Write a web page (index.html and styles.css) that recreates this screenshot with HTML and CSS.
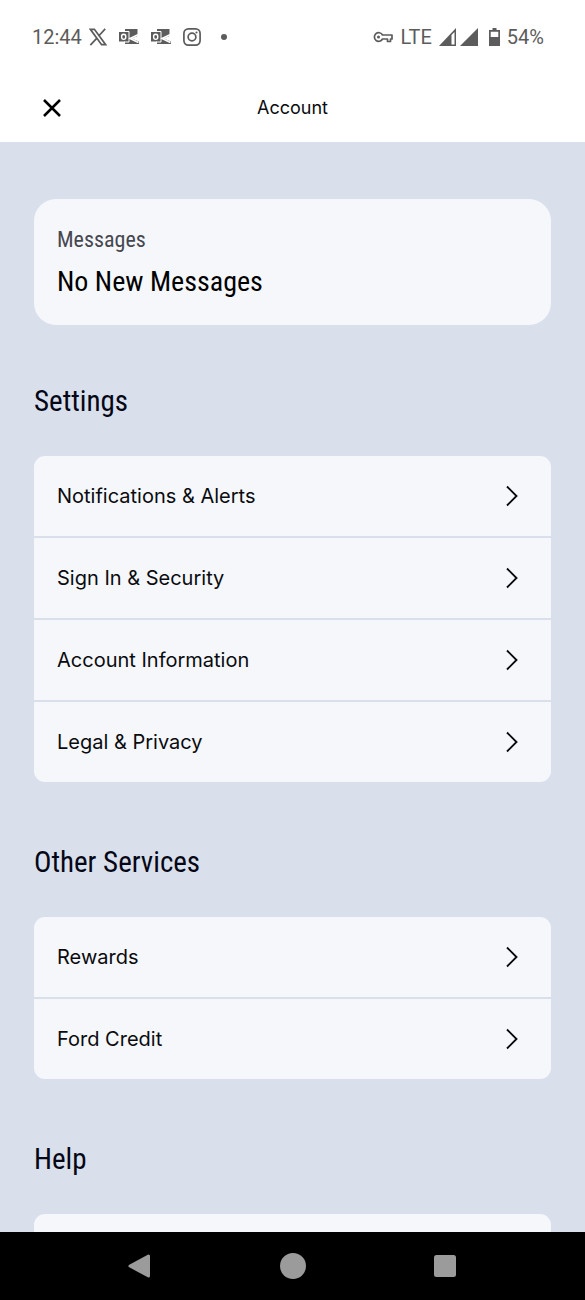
FILE: index.html
```html
<!DOCTYPE html>
<html lang="en">
<head>
<meta charset="utf-8">
<meta name="viewport" content="width=device-width, initial-scale=1">
<title>Account</title>
<link rel="stylesheet" href="styles.css">
</head>
<body>
<svg class="symbols" aria-hidden="true">
  <symbol id="chevron" viewBox="0 0 14 22"><path d="M2 1.500 11.500 11 2 20.500" fill="none" stroke="currentColor" stroke-width="1.900"/></symbol>
  <symbol id="outlook" viewBox="0 0 20 18">
    <path d="M6 1h12.500v7l-6 2.500 7.500 3V16H6z" fill="currentColor"/>
    <path d="M19.500 6.500 11 10.500l8.500 4" fill="none" stroke="#fff" stroke-width="1.600"/>
    <path d="M0 4h9.500v9.500H0z" fill="currentColor"/>
    <path d="M5 3.500h5v10.500H5" fill="none" stroke="#fff"/>
    <ellipse cx="4.700" cy="8.800" rx="2.100" ry="2.600" fill="none" stroke="#fff" stroke-width="1.400"/>
  </symbol>
</svg>
<div class="status">
  <div class="status-group">
    <span class="clock">12:44</span>
    <svg class="icon-x" viewBox="0 0 20 20" aria-hidden="true"><path d="M1.500 1.500h4.500l12.500 17H14zM18 1l-7.500 8.200M8.800 11.200 1.500 19" fill="none" stroke="currentColor" stroke-width="1.900"/></svg>
    <svg class="icon-mail" aria-hidden="true"><use href="#outlook"/></svg>
    <svg class="icon-mail" aria-hidden="true"><use href="#outlook"/></svg>
    <svg class="icon-camera" viewBox="0 0 20 20" aria-hidden="true"><rect x="1" y="1" width="18" height="18" rx="5" fill="none" stroke="currentColor" stroke-width="1.900"/><circle cx="10" cy="10" r="4.300" fill="none" stroke="currentColor" stroke-width="1.900"/><circle cx="15" cy="5" r="1.200" fill="currentColor"/></svg>
    <span class="dot"></span>
  </div>
  <div class="status-group status-right">
    <svg class="icon-key" viewBox="0 0 20 12" aria-hidden="true"><path d="M9.500 4H19v4h-1.500v2.500h-3V8h-5A4.300 4.300 0 1 1 9.500 4z" fill="none" stroke="currentColor" stroke-width="1.700" stroke-linejoin="round"/><circle cx="5.500" cy="6" r="1.500" fill="currentColor"/></svg>
    <span>LTE</span>
    <svg class="icon-signal" viewBox="0 0 39 18" aria-hidden="true"><path d="M0 18 17 0v18z" fill="currentColor"/><path d="M12.500 7 15.500 4v12.500h-3z" fill="#fff"/><path d="M21 18 39 0v18z" fill="currentColor"/></svg>
    <svg class="icon-battery" viewBox="0 0 11 18" aria-hidden="true"><path d="M3.500 0h4v2H11v16H0V2h3.500zM1.700 3.700V9h7.600V3.700z" fill="currentColor" fill-rule="evenodd"/></svg>
    <span>54%</span>
  </div>
</div>
<header class="header">
  <button class="close" type="button" aria-label="Close"><svg viewBox="0 0 20 20" aria-hidden="true"><path d="M2 2l16 16M18 2 2 18" fill="none" stroke="currentColor" stroke-width="2.500"/></svg></button>
  <h1 class="title">Account</h1>
</header>
<main class="content">
  <a class="card" href="#messages"><span class="card-label">Messages</span><span class="card-value">No New Messages</span></a>
  <section class="section">
    <h2 class="heading">Settings</h2>
    <div class="list">
      <a class="row" href="#notifications">Notifications &amp; Alerts<svg class="chevron" aria-hidden="true"><use href="#chevron"/></svg></a>
      <a class="row" href="#security">Sign In &amp; Security<svg class="chevron" aria-hidden="true"><use href="#chevron"/></svg></a>
      <a class="row" href="#information">Account Information<svg class="chevron" aria-hidden="true"><use href="#chevron"/></svg></a>
      <a class="row" href="#legal">Legal &amp; Privacy<svg class="chevron" aria-hidden="true"><use href="#chevron"/></svg></a>
    </div>
  </section>
  <section class="section">
    <h2 class="heading">Other Services</h2>
    <div class="list">
      <a class="row" href="#rewards">Rewards<svg class="chevron" aria-hidden="true"><use href="#chevron"/></svg></a>
      <a class="row" href="#credit">Ford Credit<svg class="chevron" aria-hidden="true"><use href="#chevron"/></svg></a>
    </div>
  </section>
  <section class="section">
    <h2 class="heading">Help</h2>
    <div class="list"><div class="row"></div></div>
  </section>
</main>
<nav class="navbar" aria-label="System">
  <button type="button" aria-label="Back"><svg viewBox="0 0 26 26" aria-hidden="true"><path d="M3 13 21.500 3v20z" fill="currentColor" stroke="currentColor" stroke-width="3" stroke-linejoin="round"/></svg></button>
  <button type="button" aria-label="Home"><svg viewBox="0 0 26 26" aria-hidden="true"><circle cx="13" cy="13" r="13" fill="currentColor"/></svg></button>
  <button type="button" aria-label="Recent apps"><svg viewBox="0 0 26 26" aria-hidden="true"><rect x="2" y="2" width="22" height="22" rx="2.500" fill="currentColor"/></svg></button>
</nav>
</body>
</html>
```

FILE: styles.css
```css
* { box-sizing: border-box; }
body {
  display: flex;
  flex-direction: column;
  height: 100vh;
  margin: 0;
  overflow: hidden;
  background: #fff;
  color: #0a0b0f;
  font-family: Inter, sans-serif;
}
button { padding: 0; border: 0; background: none; color: inherit; font: inherit; }
svg { display: block; flex: none; }
a { color: inherit; text-decoration: none; }
.symbols { position: absolute; width: 0; height: 0; }

.status {
  display: flex;
  flex: none;
  justify-content: space-between;
  height: 74px;
  padding: 0 41px 0 32px;
  color: #5c5c5c;
  font: 400 20px/24px Roboto, sans-serif;
}
.status-group { display: flex; align-items: center; gap: 12px; }
.status-right { gap: 7px; }
.clock { margin-right: -5px; }
.icon-x, .icon-camera { width: 18px; height: 18px; }
.icon-mail { width: 20px; height: 18px; }
.icon-key { width: 20px; height: 12px; }
.icon-signal { width: 39px; height: 18px; margin-right: 4px; }
.icon-battery { width: 11px; height: 18px; }
.dot { width: 6px; height: 6px; margin-left: 8px; border-radius: 50%; background: currentColor; }

.header {
  display: grid;
  flex: none;
  grid-template-columns: 1fr auto 1fr;
  align-items: center;
  height: 68px;
  padding: 0 42px;
}
.close { width: 20px; height: 20px; color: #000; }
.title { margin: 0; font-size: 18px; font-weight: 400; line-height: 24px; }

.content { flex: 1; min-height: 0; padding: 57px 34px 0; overflow: hidden; background: #d9e0ec; }
.card {
  display: flex;
  flex-direction: column;
  gap: 8px;
  padding: 25px 23px;
  border-radius: 22px;
  background: #f5f7fb;
  font-family: "Roboto Condensed", Roboto, sans-serif;
}
.card-label { color: #464750; font-size: 22px; line-height: 32px; }
.card-value { color: #000; font-size: 28px; line-height: 36px; }
.section { padding-top: 62px; }
.card + .section { padding-top: 58px; }
.heading {
  margin: 0 0 37px;
  color: #050716;
  font: 400 29px/36px "Roboto Condensed", Roboto, sans-serif;
}
.list { display: grid; gap: 2px; overflow: hidden; border-radius: 11px; }
.row {
  display: flex;
  align-items: center;
  justify-content: space-between;
  height: 80px;
  padding: 0 32px 0 23px;
  background: #f5f7fb;
  font-size: 20px;
  line-height: 28px;
}
.chevron { width: 14px; height: 22px; }

.navbar {
  display: flex;
  flex: none;
  align-items: center;
  justify-content: space-between;
  height: 68px;
  padding: 0 127px;
  background: #000;
  color: #9b9b9b;
}
.navbar svg { width: 26px; height: 26px; }
```
